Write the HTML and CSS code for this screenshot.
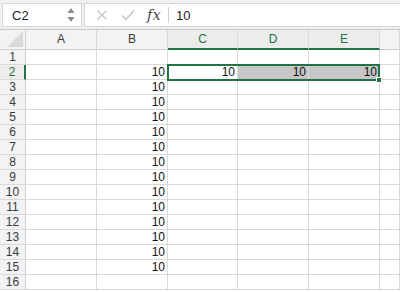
FILE: index.html
```html
<!DOCTYPE html>
<html>
<head>
<meta charset="utf-8">
<link rel="stylesheet" href="styles.css">
</head>
<body>
<div class="toolbar">
  <div class="namebox">
    <span class="name">C2</span>
    <svg class="spin" width="8" height="16" viewBox="0 0 8 16"><path d="M4 1 L7.5 6 L0.5 6 Z" fill="#8a8a8a"/><path d="M4 15 L7.5 10 L0.5 10 Z" fill="#8a8a8a"/></svg>
  </div>
  <div class="formula">
    <svg class="ico" width="12" height="12" viewBox="0 0 12 12"><path d="M1.5 1.5 L10.5 10.5 M10.5 1.5 L1.5 10.5" stroke="#c4c4c4" stroke-width="1.4" fill="none"/></svg>
    <svg class="ico chk" width="14" height="12" viewBox="0 0 14 12"><path d="M1 6.5 L5 10.5 L13 1.5" stroke="#c4c4c4" stroke-width="1.4" fill="none"/></svg>
    <span class="fx">fx</span>
    <span class="sep"></span>
    <span class="val">10</span>
  </div>
</div>
<div class="sheet">
  <div class="grid">
    <div class="cell corner"><svg width="16" height="16" viewBox="0 0 16 16"><path d="M16 0 L16 16 L0 16 Z" fill="#dadada"/></svg></div>
    <div class="cell ch">A</div><div class="cell ch">B</div><div class="cell ch sel">C</div><div class="cell ch sel">D</div><div class="cell ch sel">E</div><div class="cell ch"></div>

    <div class="cell rh">1</div><div class="cell"></div><div class="cell"></div><div class="cell"></div><div class="cell"></div><div class="cell"></div><div class="cell"></div>
    <div class="cell rh rsel">2</div><div class="cell"></div><div class="cell num">10</div><div class="cell num">10</div><div class="cell num hl">10</div><div class="cell num hl">10</div><div class="cell"></div>
    <div class="cell rh">3</div><div class="cell"></div><div class="cell num">10</div><div class="cell"></div><div class="cell"></div><div class="cell"></div><div class="cell"></div>
    <div class="cell rh">4</div><div class="cell"></div><div class="cell num">10</div><div class="cell"></div><div class="cell"></div><div class="cell"></div><div class="cell"></div>
    <div class="cell rh">5</div><div class="cell"></div><div class="cell num">10</div><div class="cell"></div><div class="cell"></div><div class="cell"></div><div class="cell"></div>
    <div class="cell rh">6</div><div class="cell"></div><div class="cell num">10</div><div class="cell"></div><div class="cell"></div><div class="cell"></div><div class="cell"></div>
    <div class="cell rh">7</div><div class="cell"></div><div class="cell num">10</div><div class="cell"></div><div class="cell"></div><div class="cell"></div><div class="cell"></div>
    <div class="cell rh">8</div><div class="cell"></div><div class="cell num">10</div><div class="cell"></div><div class="cell"></div><div class="cell"></div><div class="cell"></div>
    <div class="cell rh">9</div><div class="cell"></div><div class="cell num">10</div><div class="cell"></div><div class="cell"></div><div class="cell"></div><div class="cell"></div>
    <div class="cell rh">10</div><div class="cell"></div><div class="cell num">10</div><div class="cell"></div><div class="cell"></div><div class="cell"></div><div class="cell"></div>
    <div class="cell rh">11</div><div class="cell"></div><div class="cell num">10</div><div class="cell"></div><div class="cell"></div><div class="cell"></div><div class="cell"></div>
    <div class="cell rh">12</div><div class="cell"></div><div class="cell num">10</div><div class="cell"></div><div class="cell"></div><div class="cell"></div><div class="cell"></div>
    <div class="cell rh">13</div><div class="cell"></div><div class="cell num">10</div><div class="cell"></div><div class="cell"></div><div class="cell"></div><div class="cell"></div>
    <div class="cell rh">14</div><div class="cell"></div><div class="cell num">10</div><div class="cell"></div><div class="cell"></div><div class="cell"></div><div class="cell"></div>
    <div class="cell rh">15</div><div class="cell"></div><div class="cell num">10</div><div class="cell"></div><div class="cell"></div><div class="cell"></div><div class="cell"></div>
    <div class="cell rh">16</div><div class="cell"></div><div class="cell"></div><div class="cell"></div><div class="cell"></div><div class="cell"></div><div class="cell"></div>
  </div>
  <div class="selection"><div class="handle"></div></div>
</div>
</body>
</html>
```

FILE: styles.css
```css
* { box-sizing: border-box; }
html, body { margin: 0; padding: 0; }
body {
  width: 400px;
  height: 292px;
  overflow: hidden;
  background: #ffffff;
  font-family: "Liberation Sans", Arial, sans-serif;
  color: #1a1a1a;
}
.toolbar {
  height: 30px;
  background: #f0f0f0;
  border-bottom: 1px solid #c8c8c8;
  display: flex;
  align-items: stretch;
  padding: 3px 0 2px 2px;
  gap: 2px;
}
.namebox {
  width: 80px;
  background: #fff;
  border: 1px solid #d6d6d6;
  display: flex;
  align-items: center;
  justify-content: space-between;
  padding: 0 6px 0 9px;
}
.name { font-size: 13px; color: #222; }
.spin { display: block; }
.formula {
  flex: 1;
  background: #fff;
  border: 1px solid #d6d6d6;
  border-right: none;
  display: flex;
  align-items: center;
  padding-left: 11px;
}
.ico { display: block; }
.chk { margin-left: 13px; }
.fx {
  font-family: "DejaVu Serif", "Liberation Serif", serif;
  font-style: italic;
  font-size: 14px;
  color: #444;
  margin-left: 12px;
  letter-spacing: 0.5px;
}
.sep {
  width: 1px;
  height: 16px;
  background: #d0d0d0;
  margin-left: 7px;
}
.val { font-size: 13px; color: #222; margin-left: 7px; }

.sheet { position: relative; }
.grid {
  display: grid;
  grid-template-columns: 26px 71px 71px 70px 71px 71px 1fr;
  grid-auto-rows: 15px;
  grid-template-rows: 20px;
}
.cell {
  border-right: 1px solid #d9d9d9;
  border-bottom: 1px solid #d9d9d9;
  font-size: 12px;
  line-height: 14px;
  overflow: hidden;
  white-space: nowrap;
}
.corner {
  background: #f3f3f3;
  border-right: 1px solid #cfcfcf;
  border-bottom: 1px solid #cfcfcf;
  display: flex;
  align-items: flex-end;
  justify-content: flex-end;
  padding: 0 2px 2px 0;
}
.ch {
  background: #f3f3f3;
  border-bottom: 1px solid #cfcfcf;
  border-right: 1px solid #d8d8d8;
  text-align: center;
  line-height: 19px;
  color: #3a3a3a;
}
.ch.sel {
  background: #ececec;
  color: #217346;
  border-bottom: 2px solid #217346;
}
.rh {
  background: #f3f3f3;
  border-right: 1px solid #cfcfcf;
  text-align: center;
  color: #3a3a3a;
}
.rh.rsel {
  background: #ececec;
  color: #217346;
  border-right: 2px solid #217346;
}
.num { text-align: right; padding-right: 2px; color: #111; }
.hl { background: #c6c6c6; }

.selection {
  position: absolute;
  left: 167px;
  top: 34px;
  width: 213px;
  height: 17px;
  border: 2px solid #217346;
  pointer-events: none;
}
.handle {
  position: absolute;
  right: -4px;
  bottom: -4px;
  width: 6px;
  height: 6px;
  background: #217346;
  border: 1px solid #fff;
}
```
